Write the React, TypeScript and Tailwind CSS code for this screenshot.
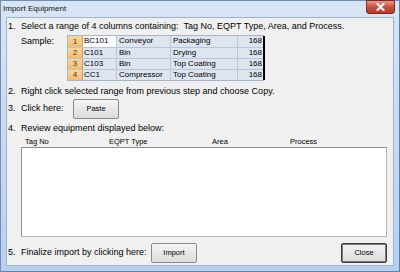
const rows = [
  { n: "1", a: "BC101", b: "Conveyor", c: "Packaging", d: "168" },
  { n: "2", a: "C101", b: "Bin", c: "Drying", d: "168" },
  { n: "3", a: "C103", b: "Bin", c: "Top Coating", d: "168" },
  { n: "4", a: "CC1", b: "Compressor", c: "Top Coating", d: "168" },
];

function WinButton({ label, w, strong }: { label: string; w: string; strong?: boolean }) {
  return (
    <div
      className={`${w} h-[20px] shrink-0 flex items-center justify-center rounded-[2px] border bg-gradient-to-b from-[#f4f4f4] to-[#dcdcdc] text-[7.5px] text-black ${
        strong ? "border-[#3a3a3a] shadow-[inset_0_0_0_1px_#7c7c7c]" : "border-[#8a8a8a]"
      }`}
    >
      {label}
    </div>
  );
}

function Step({ n, children }: { n: string; children: React.ReactNode }) {
  return (
    <div className="flex items-center h-[14px] leading-[14px] whitespace-nowrap">
      <span className="w-[13px] shrink-0">{n}</span>
      <span>{children}</span>
    </div>
  );
}

function SampleTable() {
  return (
    <div className="flex">
      <div className="border border-[#a7b4c4] bg-[#dde5f0] text-[8px] leading-[10px]">
        {rows.map((r, i) => (
          <div key={r.n} className={`flex h-[11px] ${i > 0 ? "border-t border-[#b9c6d6]" : ""}`}>
            <div className="w-[15px] flex items-center justify-center bg-gradient-to-b from-[#fbd59a] to-[#f5bd6c] border-r border-[#d69b4b] text-[#3a3a3a]">
              {r.n}
            </div>
            <div
              className={`w-[34px] pl-[1px] border-r border-[#b9c6d6] ${
                i === 0 ? "bg-white" : ""
              }`}
            >
              {r.a}
            </div>
            <div className="w-[54px] pl-[2px] border-r border-[#b9c6d6]">{r.b}</div>
            <div className="w-[67px] pl-[2px] border-r border-[#b9c6d6]">{r.c}</div>
            <div className="w-[25px] pr-[1px] text-right">{r.d}</div>
          </div>
        ))}
      </div>
      <div className="w-[2px] bg-black my-[1px] -ml-[1px]" />
    </div>
  );
}

export default function App() {
  return (
    <div
      className="w-[400px] h-[272px] flex flex-col bg-gradient-to-b from-[#d9e5f4] to-[#b9cfec] border border-[#6f8db8] border-r-[#4f7fc4] border-b-[#5b84bf]"
      style={{ fontFamily: '"Liberation Sans", Arial, sans-serif' }}
    >
      <div className="relative h-[16px] flex items-center pl-[2px] text-[8px] text-[#111]">
        Import Equipment
        <div className="absolute right-[4px] top-[-1px] w-[29px] h-[14px] rounded-b-[3px] border border-[#7a2a22] bg-gradient-to-b from-[#e49a8c] via-[#c9503f] to-[#b8392a] flex items-center justify-center">
          <svg width="9" height="8" viewBox="0 0 9 8">
            <path d="M1.5 1 L7.5 7 M7.5 1 L1.5 7" stroke="#ffffff" strokeWidth="2" strokeLinecap="square" />
          </svg>
        </div>
      </div>
      <div className="flex-1 mx-[5px] mb-[5px] bg-[#f0f0f0] border border-[#9cb3d4] flex flex-col pl-[1px] text-[9px] text-black">
        <div className="mt-[1px]">
          <Step n="1.">Select a range of 4 columns containing:&nbsp; Tag No, EQPT Type, Area, and Process.</Step>
        </div>
        <div className="flex mt-[2px]">
          <div className="w-[13px]" />
          <div className="w-[46px] leading-[12px]">Sample:</div>
          <SampleTable />
        </div>
        <div className="mt-[3px]">
          <Step n="2.">Right click selected range from previous step and choose Copy.</Step>
        </div>
        <div className="flex items-center h-[20px] mt-[1px] whitespace-nowrap">
          <span className="w-[13px] shrink-0">3.</span>
          <span className="w-[52px] shrink-0">Click here:</span>
          <WinButton label="Paste" w="w-[46px]" />
        </div>
        <div className="mt-[2px]">
          <Step n="4.">Review equipment displayed below:</Step>
        </div>
        <div className="ml-[13px] mr-[6px] mt-[2px]">
          <div className="flex h-[10px] items-center pl-[4px] text-[7.5px]">
            <span className="w-[84px]">Tag No</span>
            <span className="w-[103px]">EQPT Type</span>
            <span className="w-[78px]">Area</span>
            <span>Process</span>
          </div>
          <div className="h-[90px] bg-white border border-[#b5b5b5] border-t-[#8e8e8e] border-l-[#8e8e8e]" />
        </div>
        <div className="flex items-center h-[20px] mt-[6px] mr-[6px] whitespace-nowrap">
          <span className="w-[13px] shrink-0">5.</span>
          <span className="w-[130px] shrink-0">Finalize import by clicking here:</span>
          <WinButton label="Import" w="w-[46px]" />
          <div className="ml-auto">
            <WinButton label="Close" w="w-[46px]" strong />
          </div>
        </div>
      </div>
    </div>
  );
}
